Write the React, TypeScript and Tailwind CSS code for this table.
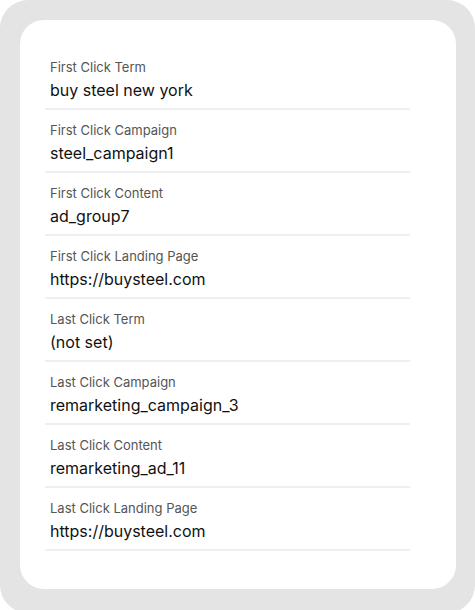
import React from "react";

const rows = [
  ["First Click Term", "buy steel new york"],
  ["First Click Campaign", "steel_campaign1"],
  ["First Click Content", "ad_group7"],
  ["First Click Landing Page", "https://buysteel.com"],
  ["Last Click Term", "(not set)"],
  ["Last Click Campaign", "remarketing_campaign_3"],
  ["Last Click Content", "remarketing_ad_11"],
  ["Last Click Landing Page", "https://buysteel.com"],
];

export default function App() {
  return (
    <div className="w-[475px] h-[610px] overflow-hidden bg-white">
      <div className="w-[475px] h-[613px] rounded-[28px] bg-[#e4e4e4] p-[20px] pr-[19px]" style={{ fontFamily: "Inter, 'Noto Sans', sans-serif" }}>
        <div className="w-[436px] h-[569px] rounded-[24px] bg-white pl-[25px] pt-[27px]">
          <div className="w-[365px] flex flex-col">
            {rows.map(([label, value], i) => (
              <div key={i} className="border-b-2 border-[#efefef] pl-[5px] pt-[10px] pb-[6px]">
                <div className="text-[13px] leading-[20px] text-[#555555]">{label}</div>
                <div className="text-[16px] leading-[24px] text-[#111111] mt-[1px]">{value}</div>
              </div>
            ))}
          </div>
        </div>
      </div>
    </div>
  );
}
